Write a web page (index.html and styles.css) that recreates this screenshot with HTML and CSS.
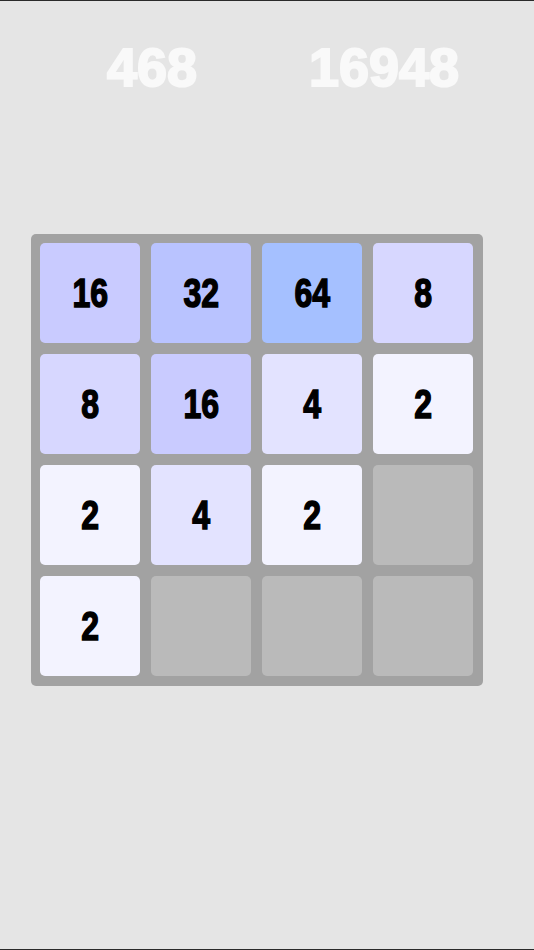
FILE: index.html
```html
<!DOCTYPE html>
<html lang="en">

<head>
    <meta charset="utf-8">
    <meta name="viewport" content="width=device-width, initial-scale=1.0">

    <title>2048</title>

    <link rel="stylesheet" href="styles.css">

</head>

<body>
    <header class="scores">
        <p class="score">468</p>
        <p class="score">16948</p>
    </header>

    <section class="board">
        <div class="tile t16"><span>16</span></div>
        <div class="tile t32"><span>32</span></div>
        <div class="tile t64"><span>64</span></div>
        <div class="tile t8"><span>8</span></div>

        <div class="tile t8"><span>8</span></div>
        <div class="tile t16"><span>16</span></div>
        <div class="tile t4"><span>4</span></div>
        <div class="tile t2"><span>2</span></div>

        <div class="tile t2"><span>2</span></div>
        <div class="tile t4"><span>4</span></div>
        <div class="tile t2"><span>2</span></div>
        <div class="tile"></div>

        <div class="tile t2"><span>2</span></div>
        <div class="tile"></div>
        <div class="tile"></div>
        <div class="tile"></div>
    </section>
</body>

</html>
```

FILE: styles.css
```css
* {
    box-sizing: border-box;
}

html {
    background: #2a2a2a;
}

body {
    margin: 0;
    height: 950px;
    background: #e5e5e5;
    border-top: 1px solid #2a2a2a;
    border-bottom: 1px solid #2a2a2a;
    font-family: "Liberation Sans", Arial, sans-serif;
    font-weight: bold;
}

.scores {
    display: flex;
    padding-left: 36px;
    margin-top: 39px;
}

/* chunky numbers: bold face thickened with a stroke */
.score {
    width: 232px;
    margin: 0;
    text-align: center;
    color: #f9f9f9;
    font-size: 54px;
    line-height: 55px;
    -webkit-text-stroke: 2px #f9f9f9;
}

.score span {
    display: inline-block;
}

.board {
    display: grid;
    grid-template-columns: repeat(4, 100px);
    grid-auto-rows: 100px;
    gap: 11px;
    width: 452px;
    height: 452px;
    padding: 9px;
    margin: 139px 0 0 31px;
    background: #a2a2a2;
    border-radius: 5px;
}

.tile {
    display: flex;
    align-items: center;
    justify-content: center;
    background: #bababa;
    border-radius: 5px;
    color: #000;
    font-size: 40px;
    line-height: 1;
}

.tile span {
    display: inline-block;
    transform: scaleX(0.8);
    -webkit-text-stroke: 1.5px #000;
}

.t2 {
    background: #f3f3ff;
}

.t4 {
    background: #e3e3ff;
}

.t8 {
    background: #d7d7ff;
}

.t16 {
    background: #c9cbff;
}

.t32 {
    background: #b9c3ff;
}

.t64 {
    background: #a5c0ff;
}
```
